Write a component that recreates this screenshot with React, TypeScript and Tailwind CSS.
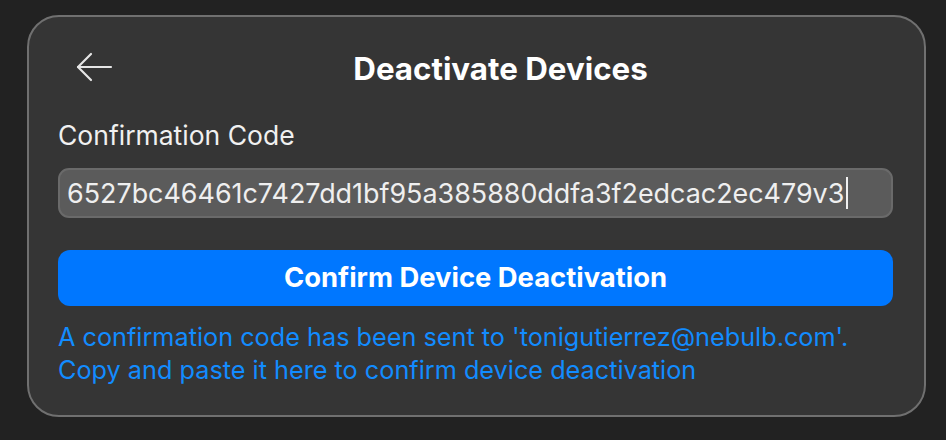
import React from "react";

export default function App() {
  return (
    <div className="w-[946px] h-[440px] bg-[#222222] pt-[15px] pl-[27px]" style={{ fontFamily: "Inter, 'Noto Sans', sans-serif" }}>
      <div className="w-[899px] h-[402px] rounded-[32px] border-2 border-[#707070] bg-[#353535] pl-[29px] pr-[31px] pt-[30px]">
        <div className="relative h-[44px] flex items-center justify-center pl-[50px]">
          <svg className="absolute left-[17px] top-[5px]" width="40" height="30" viewBox="0 0 40 30" fill="none" stroke="#e6e6e6" strokeWidth="2.2" strokeLinecap="round" strokeLinejoin="round">
            <path d="M3 15 H36" />
            <path d="M16 2 L3 15 L16 28" />
          </svg>
          <div className="text-white font-bold text-[31.3px]">Deactivate Devices</div>
        </div>
        <div className="mt-[28px] text-[#f0f0f0] text-[26.5px] leading-[32px]">Confirmation Code</div>
        <div className="mt-[17px] h-[50px] rounded-[11px] border-2 border-[#6a6a6a] bg-[#5b5b5b] flex items-center pl-[7px]">
          <span className="text-[#efefef] text-[26.9px]">6527bc46461c7427dd1bf95a385880ddfa3f2edcac2ec479v3</span>
          <span className="w-[2px] h-[32px] bg-[#f0f0f0] ml-[2px]" />
        </div>
        <button className="mt-[32px] w-full h-[56px] rounded-[12px] bg-[#0077ff] text-white font-bold text-[27.4px]">Confirm Device Deactivation</button>
        <div className="mt-[15px] text-[#128cff] text-[25.25px] leading-[33px]">
          <div>A confirmation code has been sent to 'tonigutierrez@nebulb.com'.</div>
          <div>Copy and paste it here to confirm device deactivation</div>
        </div>
      </div>
    </div>
  );
}
